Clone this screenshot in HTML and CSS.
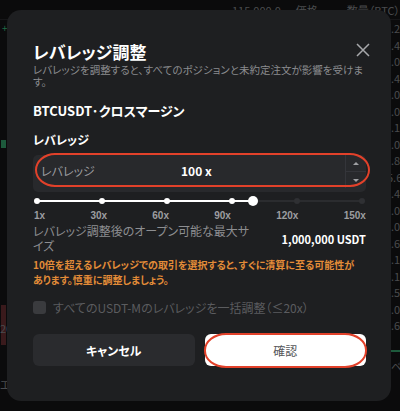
FILE: index.html
```html
<!DOCTYPE html>
<html lang="ja">
<head>
    <meta charset="UTF-8">
    <meta name="viewport" content="width=device-width, initial-scale=1.0">
    <title>レバレッジ調整</title>
    <link rel="stylesheet" href="styles.css">
</head>
<body>
    <!-- Trading screen behind the dialog -->
    <div class="backdrop">
        <div class="book-head">
            <span class="last-price">115,000.0</span>
            <span class="col-price">価格</span>
            <span class="col-qty">数量（BTC）</span>
        </div>
        <div class="book-body">
            <div class="chart">
                <span class="tick tick-green">+</span>
                <span class="candle candle-green"></span>
                <span class="candle candle-red"></span>
                <span class="chart-num">20</span>
                <span class="chart-foot">エス</span>
            </div>
            <div class="book-col">
                <span>.2</span><span>.4</span><span>.0</span><span>.4</span><span>.0</span>
                <span>.0</span><span>.1</span><span>.0</span><span>.8</span><span class="mid">5.6</span>
                <span>.4</span><span>.0</span><span>.0</span><span>.6</span><span>.1</span>
                <span>.1</span><span>.5</span><span>.0</span><span>.6</span>
                <span class="book-line"></span>
                <span class="book-foot">ベ</span>
            </div>
        </div>
    </div>

    <!-- Leverage dialog -->
    <div class="overlay">
        <div class="modal">
            <div class="modal-head">
                <h1>レバレッジ調整</h1>
                <button class="close" aria-label="閉じる">
                    <svg width="14" height="14" viewBox="0 0 14 14">
                        <path d="M1 1L13 13M13 1L1 13" stroke="#a7a8ab" stroke-width="1.5" fill="none"/>
                    </svg>
                </button>
            </div>
            <p class="subtitle">レバレッジを調整すると、すべてのポジションと未約定注文が影響を受けます。</p>

            <h2 class="pair">BTCUSDT·クロスマージン</h2>

            <div class="label">レバレッジ</div>
            <div class="lev-input">
                <span class="lev-name">レバレッジ</span>
                <span class="lev-value">100 x</span>
                <div class="stepper">
                    <span class="step"><i class="tri up"></i></span>
                    <span class="step"><i class="tri down"></i></span>
                </div>
                <span class="mark mark-input"></span>
            </div>

            <div class="slider">
                <div class="track">
                    <div class="track-fill" style="width: 66.4%"></div>
                    <span class="dot on" style="left: 0%"></span>
                    <span class="dot on" style="left: 19.9%"></span>
                    <span class="dot on" style="left: 39.9%"></span>
                    <span class="dot on" style="left: 59.9%"></span>
                    <span class="dot" style="left: 79.9%"></span>
                    <span class="dot" style="left: 100%"></span>
                    <span class="thumb" style="left: 66.4%"></span>
                </div>
                <div class="ticks">
                    <span>1x</span><span>30x</span><span>60x</span><span>90x</span><span>120x</span><span>150x</span>
                </div>
            </div>

            <div class="max-row">
                <span class="max-label">レバレッジ調整後のオープン可能な最大サイズ</span>
                <span class="max-value">1,000,000 USDT</span>
            </div>

            <p class="warning">10倍を超えるレバレッジでの取引を選択すると、すぐに清算に至る可能性があります。慎重に調整しましょう。</p>

            <label class="check-row">
                <span class="checkbox"></span>
                <span>すべてのUSDT-Mのレバレッジを一括調整（≤20x）</span>
            </label>

            <div class="actions">
                <button class="btn btn-cancel">キャンセル</button>
                <button class="btn btn-confirm">確認<span class="mark mark-btn"></span></button>
            </div>
        </div>
    </div>
</body>
</html>
```

FILE: styles.css
```css
* {
    box-sizing: border-box;
}
body {
    margin: 0;
    width: 400px;
    height: 411px;
    overflow: hidden;
    background: #0b0b0c;
    font-family: "Noto Sans CJK JP", "Noto Sans", sans-serif;
    font-feature-settings: "palt";
    color: #fff;
}

/* background screen */
.backdrop {
    height: 411px;
    color: #4a4b4e;
    font-size: 11px;
}
.book-head {
    display: flex;
    height: 20px;
    align-items: center;
    border-bottom: 1px solid #161618;
}
.last-price {
    margin-left: 232px;
    width: 70px;
}
.col-price {
    width: 56px;
}
.col-qty {
    white-space: nowrap;
}
.book-body {
    display: flex;
    height: 391px;
}
.chart {
    flex: 1;
    position: relative;
}
.tick {
    position: absolute;
    left: 2px;
    top: 0;
    font-size: 10px;
}
.tick-green {
    color: #1f6b45;
}
.candle {
    position: absolute;
    left: 1px;
    width: 5px;
}
.candle-green {
    top: 120px;
    height: 8px;
    background: #1d5a3c;
}
.candle-red {
    top: 285px;
    height: 40px;
    background: #3a1a1c;
}
.chart-num {
    position: absolute;
    left: 0;
    top: 300px;
}
.chart-foot {
    position: absolute;
    left: 0;
    top: 356px;
}
.book-col {
    width: 9px;
    display: flex;
    flex-direction: column;
    line-height: 16.5px;
    overflow: hidden;
}
.book-col .mid {
    margin-left: -4px;
}
.book-line {
    height: 2px;
    margin-top: 16px;
    background: #1d5a3c;
}
.book-foot {
    margin-top: 6px;
}

/* dialog */
.overlay {
    position: fixed;
    inset: 0;
    padding: 10px 9px 10px 7px;
}
.modal {
    height: 391px;
    background: #1e1f21;
    border-radius: 14px;
    padding: 30px 25px 0 26px;
}
.modal-head {
    display: flex;
    justify-content: space-between;
    align-items: center;
    height: 24px;
}
h1 {
    margin: 0;
    font-size: 17px;
    font-weight: 700;
    line-height: 24px;
}
.close {
    background: none;
    border: 0;
    padding: 0;
    margin: -4px -4px 0 0;
    width: 14px;
    height: 14px;
}
.subtitle {
    margin: 0;
    font-size: 10.5px;
    line-height: 12px;
    color: #8b8c8f;
}
.pair {
    margin: 14px 0 0;
    font-size: 13px;
    line-height: 18px;
    font-weight: 700;
}
.label {
    margin-top: 12px;
    font-size: 12px;
    line-height: 16px;
    font-weight: 700;
}
.lev-input {
    position: relative;
    margin-top: 7px;
    height: 37px;
    background: #28292c;
    border-radius: 5px;
    display: flex;
    align-items: center;
    padding-left: 8px;
}
.lev-name {
    font-size: 12px;
    color: #9c9da0;
    width: 140px;
    margin-top: -6px;
}
.lev-value {
    flex: 1;
    font-size: 12px;
    font-weight: 700;
    margin-top: -6px;
}
.stepper {
    width: 21px;
    height: 33px;
    border-left: 1px solid #34353a;
    display: flex;
    flex-direction: column;
    align-self: flex-start;
}
.step {
    flex: 1;
    display: flex;
    align-items: center;
    justify-content: center;
}
.step + .step {
    border-top: 1px solid #34353a;
}
.tri {
    width: 0;
    height: 0;
    border-left: 3px solid transparent;
    border-right: 3px solid transparent;
}
.tri.up {
    border-bottom: 3px solid #a0a1a4;
}
.tri.down {
    border-top: 3px solid #a0a1a4;
}

/* red annotation rings */
.mark {
    position: absolute;
    border: 2px solid #e2412a;
    border-radius: 20px / 17px;
    pointer-events: none;
}
.mark-input {
    left: 2px;
    right: -4px;
    top: -2px;
    bottom: 5px;
}
.mark-btn {
    left: -1px;
    right: -1px;
    top: -1px;
    bottom: -2px;
    border-radius: 22px / 17px;
}

/* slider */
.slider {
    margin-top: 5px;
    padding: 0 4px;
}
.track {
    position: relative;
    height: 8px;
    margin-top: 1px;
}
.track::before {
    content: "";
    position: absolute;
    left: 0;
    right: 0;
    top: 3px;
    height: 2px;
    background: #2b2c2f;
}
.track-fill {
    position: absolute;
    left: 0;
    top: 3px;
    height: 2px;
    background: #fff;
}
.dot {
    position: absolute;
    top: 1px;
    width: 6px;
    height: 6px;
    margin-left: -3px;
    border-radius: 50%;
    background: #2f3033;
}
.dot.on {
    background: #fff;
}
.thumb {
    position: absolute;
    top: -1px;
    width: 10px;
    height: 10px;
    margin-left: -5px;
    border-radius: 50%;
    background: #fff;
}
.ticks {
    display: flex;
    justify-content: space-between;
    margin: 4px -4px 0 -3px;
    font-family: "Liberation Sans", Arial, sans-serif;
    font-size: 10px;
    line-height: 13px;
    color: #9c9da0;
    font-weight: 700;
}

.max-row {
    display: flex;
    justify-content: space-between;
    align-items: center;
    margin-top: 1px;
}
.max-label {
    width: 226px;
    font-size: 12px;
    line-height: 15px;
    color: #8d8e91;
}
.max-value {
    font-size: 11px;
    font-weight: 700;
    margin-top: 2px;
}

.warning {
    margin: 4px 0 0;
    padding-right: 6px;
    font-size: 10px;
    line-height: 15px;
    font-weight: 700;
    color: #e38c38;
}

.check-row {
    display: flex;
    align-items: center;
    gap: 7px;
    margin-top: 12px;
    font-size: 12px;
    color: #5b5c5f;
}
.checkbox {
    width: 13px;
    height: 13px;
    border-radius: 3px;
    background: #3a3b3e;
}

.actions {
    display: flex;
    gap: 10px;
    margin-top: 18px;
}
.btn {
    position: relative;
    flex: 1;
    height: 32px;
    border: 0;
    border-radius: 6px;
    font-family: inherit;
    font-feature-settings: "palt";
    font-size: 12px;
}
.btn-cancel {
    background: #2a2b2e;
    color: #fff;
    font-weight: 700;
}
.btn-confirm {
    background: #fff;
    color: #555659;
}
```
